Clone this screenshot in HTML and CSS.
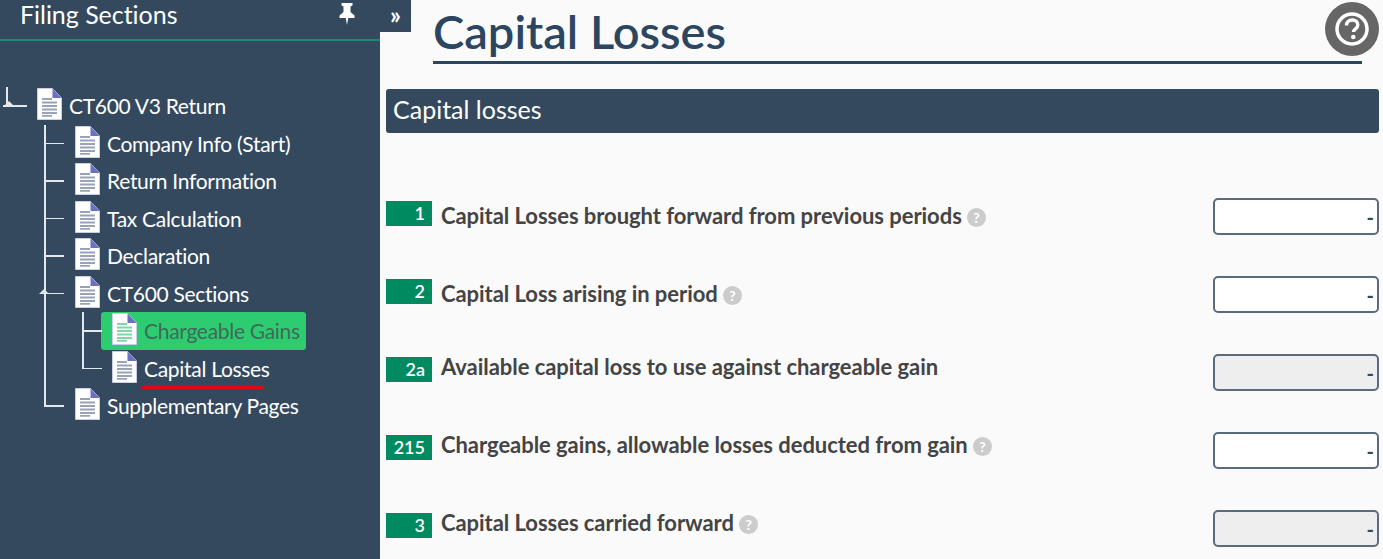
FILE: index.html
```html
<!DOCTYPE html>
<html lang="en">
<head>
  <meta charset="UTF-8">
  <title>Capital Losses</title>
  <link rel="stylesheet" href="styles.css">
</head>
<body>
  <svg class="icon-defs" width="0" height="0">
    <symbol id="doc" viewBox="0 0 25 32">
      <path d="M0.500 0.500h15l9 9.500v21.500h-24z" fill="#fff" stroke="#c9cee8" stroke-width="1"/>
      <path d="M15.500 0.500l9 9.500h-9z" fill="#6a70c2"/>
      <path d="M5 11h10M5 14.500h15M5 18h15M5 21.500h15M5 25h15M5 27.800h10" stroke="currentColor" stroke-width="1.800" fill="none"/>
    </symbol>
  </svg>

  <!-- sidebar -->
  <aside class="sidebar">
    <div class="sidebar-head">
      <span class="sidebar-title">Filing Sections</span>
      <svg class="pin" viewBox="0 0 16 22" width="16" height="22"><path d="M2.500 0h11v2.500l-2 1v5.500l4 3.500v2.500H9.300L8 22l-1.300-7H0.500v-2.500l4-3.500V3.500l-2-1z" fill="#fff"/></svg>
    </div>
    <ul class="tree">
      <li class="node root-node">
        <i class="toggle"></i>
        <svg class="doc"><use href="#doc"/></svg><span>CT600 V3 Return</span>
        <ul class="branch">
          <li class="node"><svg class="doc"><use href="#doc"/></svg><span>Company Info (Start)</span></li>
          <li class="node"><svg class="doc"><use href="#doc"/></svg><span>Return Information</span></li>
          <li class="node"><svg class="doc"><use href="#doc"/></svg><span>Tax Calculation</span></li>
          <li class="node"><svg class="doc"><use href="#doc"/></svg><span>Declaration</span></li>
          <li class="node open-node">
            <i class="toggle"></i>
            <svg class="doc"><use href="#doc"/></svg><span>CT600 Sections</span>
            <ul class="branch sub">
              <li class="node active"><svg class="doc"><use href="#doc"/></svg><span>Chargeable Gains</span></li>
              <li class="node current"><svg class="doc"><use href="#doc"/></svg><span>Capital Losses</span></li>
            </ul>
          </li>
          <li class="node"><svg class="doc"><use href="#doc"/></svg><span>Supplementary Pages</span></li>
        </ul>
      </li>
    </ul>
  </aside>

  <button class="collapse-tab">»</button>

  <!-- main content -->
  <main class="content">
    <div class="page-head">
      <h1>Capital Losses</h1>
      <div class="help-btn">
        <svg viewBox="0 0 54 54" width="54" height="54">
          <circle cx="27" cy="27" r="27" fill="#666"/>
          <circle cx="27" cy="27" r="15" fill="none" stroke="#fff" stroke-width="3.500"/>
          <path d="M21.500 23.500c0-3.500 2.500-5.500 5.700-5.500s5.600 2 5.600 5c0 3.800-4.300 3.800-4.300 7" fill="none" stroke="#fff" stroke-width="3.400"/>
          <circle cx="28.300" cy="35" r="2.300" fill="#fff"/>
        </svg>
      </div>
    </div>

    <div class="section-bar">Capital losses</div>

    <div class="rows">
      <div class="row low">
        <span class="badge">1</span>
        <span class="label">Capital Losses brought forward from previous periods <i class="hint">?</i></span>
        <input class="amount" value="-">
      </div>
      <div class="row low">
        <span class="badge">2</span>
        <span class="label">Capital Loss arising in period <i class="hint">?</i></span>
        <input class="amount" value="-">
      </div>
      <div class="row">
        <span class="badge">2a</span>
        <span class="label">Available capital loss to use against chargeable gain</span>
        <input class="amount locked" value="-" readonly>
      </div>
      <div class="row">
        <span class="badge">215</span>
        <span class="label">Chargeable gains, allowable losses deducted from gain <i class="hint">?</i></span>
        <input class="amount" value="-">
      </div>
      <div class="row">
        <span class="badge">3</span>
        <span class="label">Capital Losses carried forward <i class="hint">?</i></span>
        <input class="amount locked" value="-" readonly>
      </div>
    </div>
  </main>
</body>
</html>
```

FILE: styles.css
```css
* {
  margin: 0;
  padding: 0;
  box-sizing: border-box;
}

html, body {
  height: 100%;
  overflow: hidden;
}

body {
  display: flex;
  font-family: Lato, 'Open Sans', sans-serif;
  background: #fafafa;
  color: #444;
  position: relative;
}

.icon-defs {
  position: absolute;
}

/* sidebar */
.sidebar {
  width: 380px;
  flex-shrink: 0;
  background: #34495e;
  color: #fff;
}

.sidebar-head {
  height: 41px;
  padding: 0 25px 11px 20px;
  border-bottom: 2px solid #1a8a72;
  display: flex;
  align-items: center;
  justify-content: space-between;
}

.sidebar-title {
  font-size: 25px;
  letter-spacing: -0.03px;
}

/* tree */
.tree {
  list-style: none;
  padding: 46px 0 0 37px;
}

.tree ul {
  list-style: none;
}

.node {
  position: relative;
  font-size: 21px;
  letter-spacing: -0.3px;
}

.node > .doc {
  width: 25px;
  height: 32px;
  color: #98a2b8;
  vertical-align: top;
  margin-right: 7px;
  margin-top: 1px;
}

.node > span {
  line-height: 37.500px;
}

.branch {
  position: relative;
  padding-left: 38px;
}

.branch .node {
  height: 37.500px;
}

.branch .open-node {
  height: auto;
}

.branch.sub {
  padding-left: 37px;
}

/* tree lines */
.branch::before {
  content: '';
  position: absolute;
  left: 7px;
  top: 0;
  bottom: 18px;
  width: 1.500px;
  background: #e4e8ec;
}

.branch > .node::before {
  content: '';
  position: absolute;
  left: -31px;
  top: 18px;
  width: 20px;
  height: 1.500px;
  background: #e4e8ec;
}

.root-node::before {
  content: '';
  position: absolute;
  left: -34px;
  top: 18px;
  width: 24px;
  height: 1.500px;
  background: #e4e8ec;
}

.root-node::after {
  content: '';
  position: absolute;
  left: -31px;
  top: 0;
  width: 1.500px;
  height: 19px;
  background: #e4e8ec;
}

.toggle {
  position: absolute;
  top: 14px;
  left: -36px;
  border-left: 5px solid transparent;
  border-bottom: 5px solid #e4e8ec;
  border-right: 5px solid transparent;
}

.root-node > .toggle {
  left: -33px;
}

.branch.sub::before {
  left: 7px;
  bottom: 19px;
}

.branch.sub > .node::before {
  left: -30px;
  width: 20px;
}

/* tree states */
.node.active {
  color: #3f6b58;
  z-index: 0;
}

.node.active > .doc {
  color: #7fd6a6;
}

.node.active::after {
  content: '';
  position: absolute;
  z-index: -1;
  left: -11px;
  top: 0;
  width: 205px;
  height: 38px;
  background: #2ecc71;
  border-radius: 3px;
}

.node.current > span {
  position: relative;
  display: inline-block;
}

.node.current > span::after {
  content: '';
  position: absolute;
  left: -2px;
  right: 6px;
  bottom: -2px;
  height: 3px;
  background: #e30613;
}

/* collapse tab */
.collapse-tab {
  position: absolute;
  left: 380px;
  top: 0;
  width: 31px;
  height: 32px;
  padding-bottom: 7px;
  border: none;
  background: #34495e;
  color: #fff;
  font: bold 24px Lato, sans-serif;
}

/* main */
.content {
  flex: 1;
  padding: 0 4px 0 6px;
  min-width: 0;
}

.page-head {
  position: relative;
  margin: 0 17px 0 47px;
  height: 64px;
  border-bottom: 3px solid #2c4560;
}

.page-head h1 {
  font-size: 47px;
  font-weight: 600;
  line-height: 62px;
  color: #2c4560;
}

.help-btn {
  position: absolute;
  right: -17px;
  top: 2px;
  height: 54px;
}

.section-bar {
  margin-top: 25px;
  height: 44px;
  line-height: 41px;
  padding-left: 7px;
  font-size: 25px;
  color: #fff;
  background: #34495e;
  border-radius: 3px;
}

.rows {
  margin-top: 68px;
}

.row {
  height: 78px;
  display: flex;
  align-items: flex-start;
}

.row:last-child {
  height: 46px;
}

.badge {
  width: 46px;
  height: 25px;
  line-height: 25px;
  padding-right: 7px;
  text-align: right;
  font-size: 18px;
  font-weight: 600;
  color: #fff;
  background: #008a60;
  flex-shrink: 0;
}

.label {
  margin-left: 9px;
  flex: 1;
  font-size: 22px;
  font-weight: 700;
  letter-spacing: -0.05px;
  line-height: 24px;
  color: #444;
}

.row .label {
  margin-top: -2px;
}

.row.low .label {
  margin-top: 3px;
}

.hint {
  display: inline-block;
  width: 19px;
  height: 19px;
  border-radius: 50%;
  background: #ccc;
  color: #fff;
  font-size: 14px;
  font-style: normal;
  line-height: 19px;
  text-align: center;
  vertical-align: 1px;
}

.amount {
  width: 166px;
  height: 37px;
  margin-top: -3px;
  padding: 0 3px;
  border: 2px solid #5a6b7d;
  border-radius: 5px;
  background: #fff;
  font: bold 20px Lato, sans-serif;
  color: #34495e;
  text-align: right;
  outline: none;
}

.amount.locked {
  background: #eee;
}
```
